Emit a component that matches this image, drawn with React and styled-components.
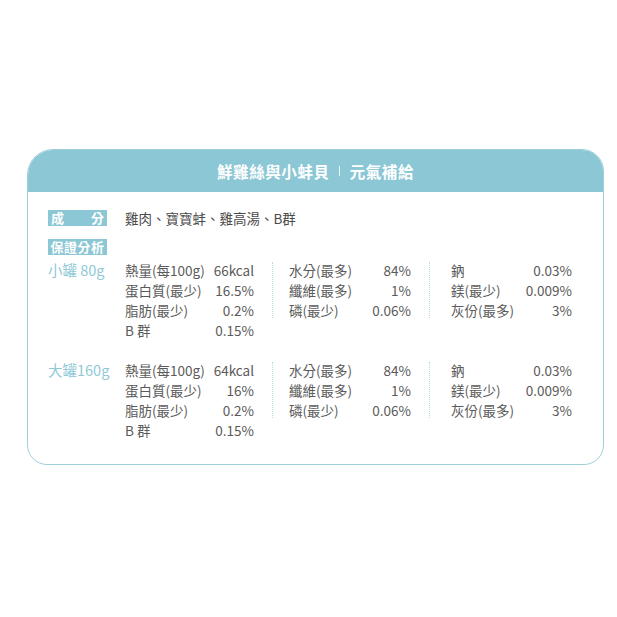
import React from 'react'
import styled, { createGlobalStyle } from 'styled-components'

const GlobalStyle = createGlobalStyle`
  body {
    margin: 0;
    background: #ffffff;
    font-family: "Noto Sans CJK TC", "Noto Sans", sans-serif;
  }
`

const Page = styled.div`
  width: 617px;
  height: 617px;
  padding: 149px 0 0 27px;
  box-sizing: border-box;
`

const Card = styled.div`
  width: 577px;
  box-sizing: border-box;
  border: 1.5px solid #9dcfd9;
  border-radius: 26px 22px 20px 20px;
  overflow: hidden;
  background: #fff;
`

const Header = styled.div`
  height: 42px;
  background: #8cc7d5;
  display: flex;
  align-items: center;
  justify-content: center;
  color: #fff;
  font-size: 15.5px;
  font-weight: 700;
  letter-spacing: 0.6px;
`

const Divider = styled.span`
  display: inline-block;
  width: 1px;
  height: 10px;
  background: rgba(255, 255, 255, 0.85);
  margin: 0 10px 0 9px;
`

const Body = styled.div`
  padding: 18px 0 24px 20px;
  display: flex;
  flex-direction: column;
`

const InfoRow = styled.div`
  display: flex;
  align-items: center;
  gap: 18px;
  margin-bottom: ${(p) => p.$gap || 0}px;
`

const Tag = styled.div`
  width: 59px;
  height: 16px;
  background: #8cc7d5;
  color: #fff;
  font-size: 13px;
  font-weight: 700;
  line-height: 16px;
  display: flex;
  justify-content: ${(p) => (p.$spread ? 'space-between' : 'center')};
  padding: 0 ${(p) => (p.$spread ? 3 : 0)}px;
  box-sizing: border-box;
  letter-spacing: ${(p) => (p.$spread ? 0 : 0.5)}px;
`

const Ingredients = styled.div`
  font-size: 13.5px;
  color: #4a4a4a;
  line-height: 16px;
`

const SizeBlock = styled.div`
  display: grid;
  grid-template-columns: 77px 129px 35px 122px 40px 121px;
  grid-auto-rows: 20px;
  margin-top: ${(p) => p.$top}px;
  font-size: 13.5px;
  color: #5a5a5a;
`

const SizeLabel = styled.div`
  grid-column: 1;
  grid-row: 1;
  color: #8fc9d6;
  font-size: 14.5px;
  line-height: 20px;
  white-space: nowrap;
`

const Cell = styled.div`
  grid-column: ${(p) => p.$col};
  grid-row: ${(p) => p.$row};
  display: flex;
  justify-content: space-between;
  align-items: center;
  line-height: 20px;
  white-space: nowrap;
`

const Sep = styled.div`
  grid-column: ${(p) => p.$col};
  grid-row: 1 / span 3;
  margin: 2px 0 2px 18px;
  border-left: 1px dotted #b9dde5;
`

const columns = [
  { col: 2, key: 'a' },
  { col: 4, key: 'b' },
  { col: 6, key: 'c' },
]

const small = {
  label: '小罐 80g',
  a: [
    ['熱量(每100g)', '66kcal'],
    ['蛋白質(最少)', '16.5%'],
    ['脂肪(最少)', '0.2%'],
    ['B 群', '0.15%'],
  ],
  b: [
    ['水分(最多)', '84%'],
    ['纖維(最多)', '1%'],
    ['磷(最少)', '0.06%'],
  ],
  c: [
    ['鈉', '0.03%'],
    ['鎂(最少)', '0.009%'],
    ['灰份(最多)', '3%'],
  ],
}

const large = {
  ...small,
  label: '大罐160g',
  a: [
    ['熱量(每100g)', '64kcal'],
    ['蛋白質(最少)', '16%'],
    ['脂肪(最少)', '0.2%'],
    ['B 群', '0.15%'],
  ],
}

const Size = ({ data, top }) => (
  <SizeBlock $top={top}>
    <SizeLabel>{data.label}</SizeLabel>
    {columns.map((c) =>
      data[c.key].map((item, i) => (
        <Cell key={c.key + i} $col={c.col} $row={i + 1}>
          <span>{item[0]}</span>
          <span>{item[1]}</span>
        </Cell>
      ))
    )}
    <Sep $col={3} />
    <Sep $col={5} />
  </SizeBlock>
)

const App = () => (
  <>
    <GlobalStyle />
    <Page>
      <Card>
        <Header>
          鮮雞絲與小蚌貝<Divider />元氣補給
        </Header>
        <Body>
          <InfoRow $gap={13}>
            <Tag $spread>
              <span>成</span>
              <span>分</span>
            </Tag>
            <Ingredients>雞肉、寶寶蚌、雞高湯、B群</Ingredients>
          </InfoRow>
          <InfoRow>
            <Tag>保證分析</Tag>
          </InfoRow>
          <Size data={small} top={5} />
          <Size data={large} top={20} />
        </Body>
      </Card>
    </Page>
  </>
)

export default App
